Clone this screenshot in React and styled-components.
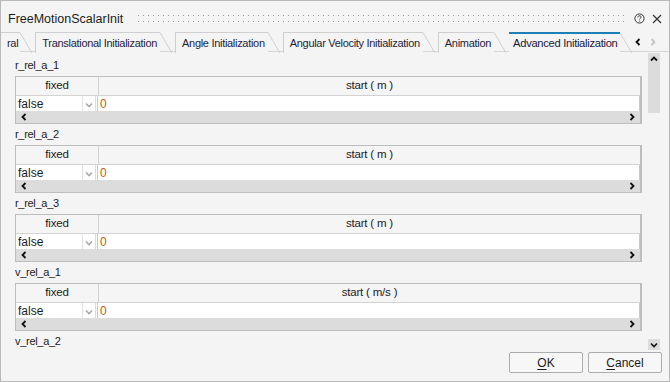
import React from 'react';
import styled, { createGlobalStyle, css } from 'styled-components';

const GlobalStyle = createGlobalStyle`
  html, body { margin: 0; padding: 0; background: #ffffff; }
  body { font-family: "Liberation Sans", Arial, sans-serif; }
`;

const Window = styled.div`
  box-sizing: border-box;
  width: 670px;
  height: 382px;
  border: 1px solid #b9b9b9;
  background: #f4f4f4;
  display: flex;
  flex-direction: column;
  overflow: hidden;
  color: #1c1c1c;
`;

const TitleBar = styled.div`
  height: 30px;
  flex: none;
  display: flex;
  align-items: center;
  padding: 5px 7px 0 7px;
  box-sizing: border-box;
`;

const Title = styled.div`
  font-size: 12.5px;
  color: #1c1c1c;
`;

const Grip = styled.div`
  flex: 1;
  height: 7px;
  margin: 0 10px 0 15px;
  background-image:
    linear-gradient(90deg, #989898 1px, transparent 1px),
    linear-gradient(90deg, #989898 1px, transparent 1px);
  background-size: 5px 1px, 5px 1px;
  background-position: 0 0, 0 6px;
  background-repeat: repeat-x;
`;

const TitleIcon = styled.svg`
  display: block;
  margin-left: ${({ gap }) => gap || 0}px;
`;

const TabBar = styled.div`
  height: 22px;
  flex: none;
  display: flex;
  align-items: flex-end;
  position: relative;
  box-sizing: border-box;
  &::after {
    content: '';
    position: absolute;
    left: 0;
    right: 0;
    bottom: 1px;
    height: 1px;
    background: #d6d6d6;
  }
`;

const Tab = styled.div`
  display: flex;
  align-items: stretch;
  height: 21px;
  margin-right: 3px;
  position: relative;
  z-index: 1;
`;

const TabLabel = styled.div`
  display: flex;
  align-items: center;
  box-sizing: border-box;
  padding: 0 3px 1px 6px;
  font-size: 11px;
  letter-spacing: -0.3px;
  color: #1e1e3a;
  white-space: nowrap;
  border-top: 1px solid #cfcfcf;
  border-left: ${({ first }) => (first ? 'none' : '1px solid #cfcfcf')};
  background: #f4f4f4;
  ${({ first }) => first && css`padding-left: 6px; padding-right: 2px;`}
  ${({ active }) => active && css`
    border-top: 2px solid #1d7fb5;
    border-left: none;
    padding-left: 4px;
    font-size: 11.2px;
    color: #1a1a3a;
  `}
`;

const Slant = styled.svg`
  display: block;
  width: 12px;
  height: 21px;
  flex: none;
`;

const TabArrows = styled.div`
  display: flex;
  align-items: center;
  gap: 9px;
  height: 21px;
  margin-left: 0;
  padding-bottom: 1px;
  box-sizing: border-box;
`;

const Main = styled.div`
  flex: 1;
  display: flex;
  min-height: 0;
  padding-left: 14px;
`;

const Content = styled.div`
  flex: 1;
  overflow: hidden;
  padding-top: 3px;
`;

const Section = styled.div`
  margin-bottom: 1px;
`;

const Label = styled.div`
  height: 20px;
  line-height: 19px;
  font-size: 11px;
  letter-spacing: -0.3px;
  color: #1c1c1c;
`;

const Table = styled.div`
  box-sizing: border-box;
  height: 48px;
  border: 1px solid #bdbdbd;
  border-right-width: 2px;
  display: flex;
  flex-direction: column;
`;

const HeadRow = styled.div`
  display: flex;
  height: 18px;
  border-bottom: 1px solid #d3d3d3;
  background: #f5f5f5;
`;

const HeadCell = styled.div`
  box-sizing: border-box;
  width: ${({ w }) => (w ? `${w}px` : 'auto')};
  flex: ${({ w }) => (w ? 'none' : 1)};
  border-right: ${({ w }) => (w ? '1px solid #d3d3d3' : 'none')};
  text-align: center;
  font-size: 11.5px;
  letter-spacing: -0.2px;
  line-height: 17px;
  color: #1c1c1c;
`;

const DataRow = styled.div`
  display: flex;
  height: 15px;
  background: #ffffff;
  overflow: hidden;
`;

const ComboCell = styled.div`
  box-sizing: border-box;
  width: 82px;
  flex: none;
  display: flex;
  border-right: 1px solid #c9c9c9;
`;

const ComboText = styled.div`
  box-sizing: border-box;
  width: 67px;
  border-right: 1px solid #e2e2e2;
  padding: 2px 0 0 2px;
  font-size: 12px;
  line-height: 13px;
  color: #1c1c1c;
`;

const ComboArrow = styled.div`
  flex: 1;
  display: flex;
  align-items: center;
  justify-content: center;
  padding-top: 3px;
  border-right: 1px solid #dcdcdc;
  margin-right: 1px;
`;

const ValueCell = styled.div`
  flex: 1;
  padding: 2px 0 0 2px;
  font-size: 12px;
  line-height: 13px;
  color: #c0600c;
  border-right: 1px solid #c9c9c9;
`;

const HScroll = styled.div`
  height: 12px;
  background: #dcdcdc;
  display: flex;
  align-items: center;
  justify-content: space-between;
  padding: 0 5px 0 5px;
`;

const Arrow = styled.svg`
  display: block;
`;

const VScroll = styled.div`
  width: 12px;
  flex: none;
  margin: 0 9px 0 6px;
  display: flex;
  flex-direction: column;
  justify-content: space-between;
`;

const VThumb = styled.div`
  height: 60px;
  background: #dcdcdc;
  display: flex;
  justify-content: center;
  padding-top: 3px;
  box-sizing: border-box;
`;

const VButton = styled.div`
  height: 11px;
  background: #dcdcdc;
  display: flex;
  align-items: center;
  justify-content: center;
`;

const Footer = styled.div`
  height: 31px;
  flex: none;
  display: flex;
  justify-content: flex-end;
  gap: 5px;
  padding: 2px 7px 0 0;
  box-sizing: border-box;
`;

const Button = styled.button`
  box-sizing: border-box;
  width: 74px;
  height: 21px;
  border: 1px solid #adadad;
  border-radius: 2px;
  background: #f7f7f7;
  font-family: "Liberation Sans", Arial, sans-serif;
  font-size: 12px;
  color: #1c1c1c;
  padding: 0;
  & u { text-decoration: underline; text-underline-offset: 2px; }
`;

const tabs = [
  { label: 'ral', first: true },
  { label: 'Translational Initialization' },
  { label: 'Angle Initialization' },
  { label: 'Angular Velocity Initialization' },
  { label: 'Animation' },
  { label: 'Advanced Initialization', active: true },
];

// the last one is scrolled so only its name shows
const sections = [
  { name: 'r_rel_a_1', unit: 'm' },
  { name: 'r_rel_a_2', unit: 'm' },
  { name: 'r_rel_a_3', unit: 'm' },
  { name: 'v_rel_a_1', unit: 'm/s' },
  { name: 'v_rel_a_2', unit: 'm/s', cut: true },
];

const ChevronLeft = ({ color = '#111' }) => (
  <Arrow width="6" height="8" viewBox="0 0 6 8">
    <polyline points="4.5,1 1.5,4 4.5,7" fill="none" stroke={color} strokeWidth="1.8" />
  </Arrow>
);

const ChevronRight = ({ color = '#111' }) => (
  <Arrow width="6" height="8" viewBox="0 0 6 8">
    <polyline points="1.5,1 4.5,4 1.5,7" fill="none" stroke={color} strokeWidth="1.8" />
  </Arrow>
);

const ChevronUp = () => (
  <Arrow width="8" height="6" viewBox="0 0 8 6">
    <polyline points="1,4.5 4,1.5 7,4.5" fill="none" stroke="#111" strokeWidth="1.8" />
  </Arrow>
);

const ChevronDown = ({ color = '#111' }) => (
  <Arrow width="8" height="6" viewBox="0 0 8 6">
    <polyline points="1,1.5 4,4.5 7,1.5" fill="none" stroke={color} strokeWidth="1.6" />
  </Arrow>
);

const Parameter = ({ name, unit, cut }) => (
  <Section>
    <Label>{name}</Label>
    {!cut && (
      <Table>
        <HeadRow>
          <HeadCell w={83}>fixed</HeadCell>
          <HeadCell>start ( {unit} )</HeadCell>
        </HeadRow>
        <DataRow>
          <ComboCell>
            <ComboText>false</ComboText>
            <ComboArrow><ChevronDown color="#a8a8a8" /></ComboArrow>
          </ComboCell>
          <ValueCell>0</ValueCell>
        </DataRow>
        <HScroll>
          <ChevronLeft />
          <ChevronRight />
        </HScroll>
      </Table>
    )}
  </Section>
);

const App = () => (
  <>
    <GlobalStyle />
    <Window>
      <TitleBar>
        <Title>FreeMotionScalarInit</Title>
        <Grip />
        <TitleIcon width="11" height="11" viewBox="0 0 11 11">
          <circle cx="5.5" cy="5.5" r="4.6" fill="none" stroke="#333" strokeWidth="1" />
          <path d="M3.9 4.3 C3.9 3.3 4.6 2.8 5.5 2.8 C6.4 2.8 7.1 3.4 7.1 4.2 C7.1 5.1 5.6 5.3 5.6 6.4" fill="none" stroke="#333" strokeWidth="1" />
          <circle cx="5.6" cy="8" r="0.6" fill="#333" />
        </TitleIcon>
        <TitleIcon gap={7} width="10" height="10" viewBox="0 0 10 10">
          <path d="M1 1 L9 9 M9 1 L1 9" stroke="#333" strokeWidth="1.2" />
        </TitleIcon>
      </TitleBar>

      <TabBar>
        {tabs.map((t) => (
          <Tab key={t.label}>
            <TabLabel first={t.first} active={t.active}>{t.label}</TabLabel>
            <Slant viewBox="0 0 12 21">
              <line x1="0" y1={t.active ? 1 : 0.5} x2="12" y2="21" stroke="#cfcfcf" strokeWidth="1" />
            </Slant>
          </Tab>
        ))}
        <TabArrows>
          <ChevronLeft />
          <ChevronRight color="#c4c4c4" />
        </TabArrows>
      </TabBar>

      <Main>
        <Content>
          {sections.map((s) => (
            <Parameter key={s.name} name={s.name} unit={s.unit} cut={s.cut} />
          ))}
        </Content>
        <VScroll>
          <VThumb><ChevronUp /></VThumb>
          <VButton><ChevronDown /></VButton>
        </VScroll>
      </Main>

      <Footer>
        <Button><u>O</u>K</Button>
        <Button><u>C</u>ancel</Button>
      </Footer>
    </Window>
  </>
);

export default App;
